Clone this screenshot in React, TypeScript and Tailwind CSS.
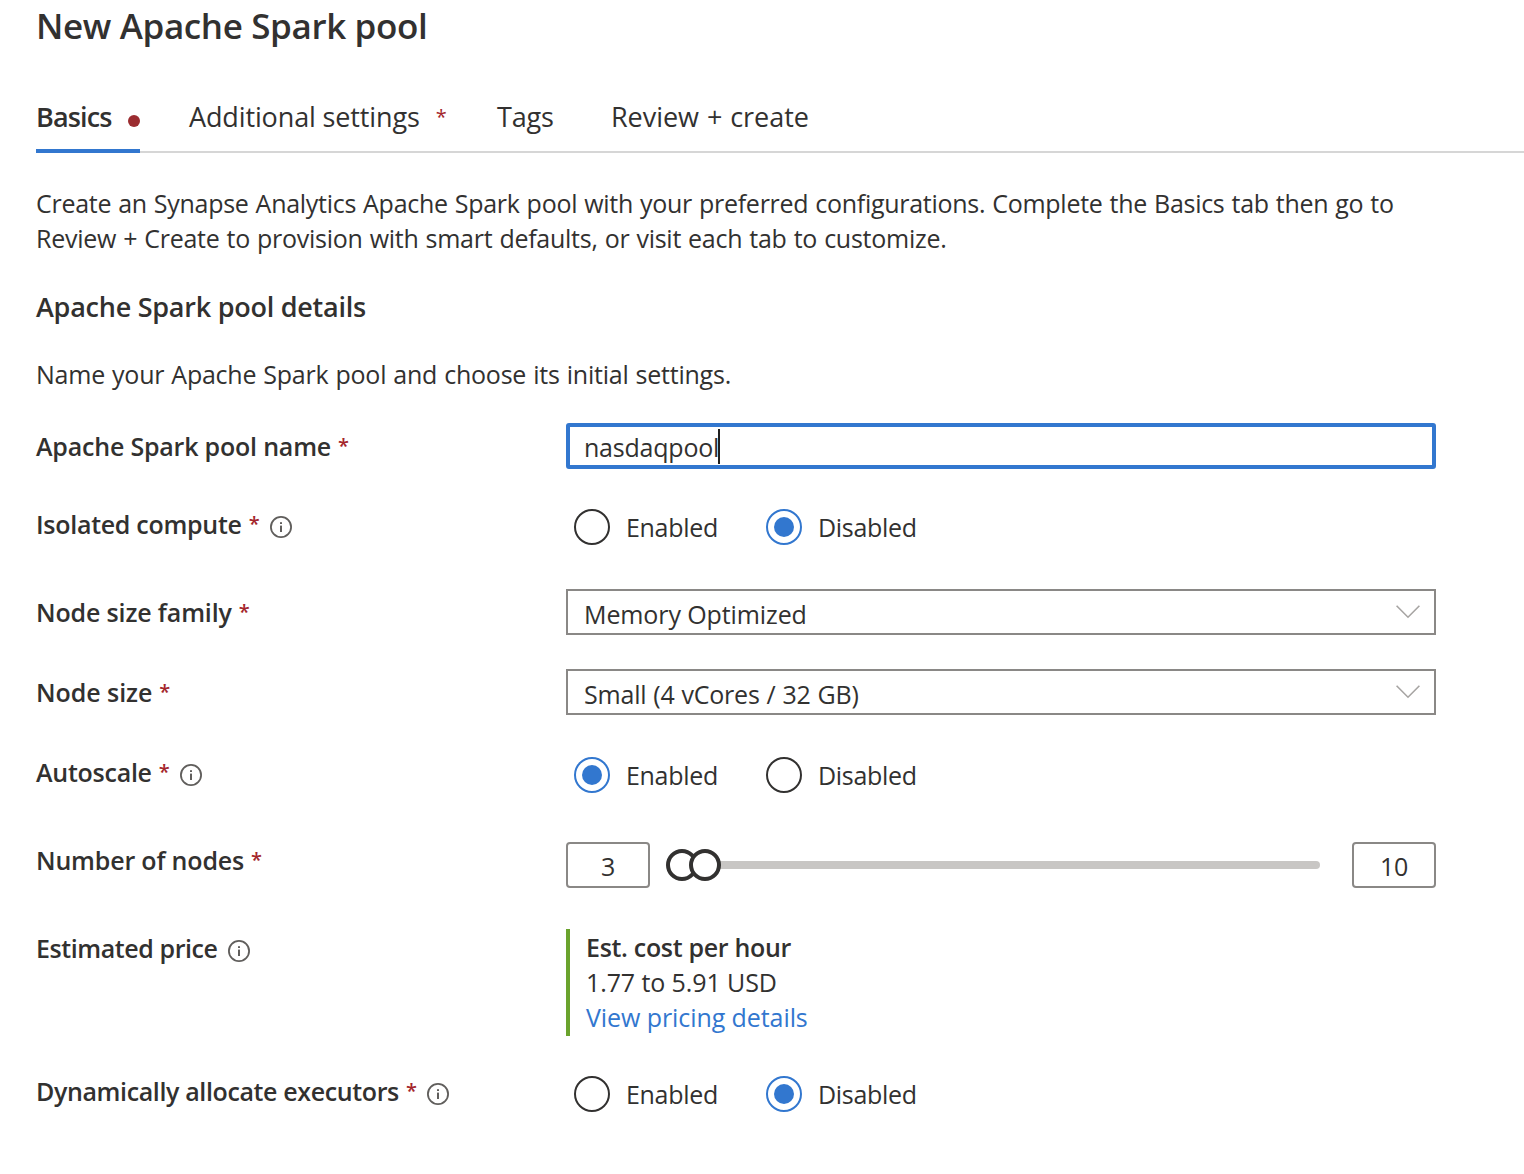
import React, { ReactNode } from "react";

function InfoIcon() {
  return (
    <svg className="mt-[10px] ml-[10px] h-[22px] w-[22px] shrink-0" viewBox="0 0 22 22" fill="none">
      <circle cx="11" cy="11" r="10.1" stroke="#605e5c" strokeWidth="1.8" />
      <rect x="10" y="6.2" width="2" height="1.8" fill="#605e5c" />
      <rect x="10" y="9.6" width="2" height="6.4" fill="#605e5c" />
    </svg>
  );
}

function Star({ className }: { className: string }) {
  return <span className={`w-[11px] pt-[2px] text-[20px] leading-[32px] text-[#a4262c] ${className}`}>*</span>;
}

function Field({
  label,
  className,
  labelClass,
  required = true,
  info = false,
  children,
}: {
  label: string;
  className: string;
  labelClass: string;
  required?: boolean;
  info?: boolean;
  children: ReactNode;
}) {
  return (
    <div className={`flex items-start ${className}`}>
      <div className={`flex w-[530px] shrink-0 leading-[36px] font-semibold whitespace-nowrap ${labelClass}`}>
        <span>{label}</span>
        {required && <Star className="ml-[7px]" />}
        {info && <InfoIcon />}
      </div>
      {children}
    </div>
  );
}

function Radio({ label, checked, className }: { label: string; checked: boolean; className: string }) {
  return (
    <div className={`flex items-center ${className}`}>
      <span
        className={`flex h-9 w-9 items-center justify-center rounded-full border-2 ${
          checked ? "border-[#3277cf]" : "border-[#323130]"
        }`}
      >
        {checked && <span className="h-5 w-5 rounded-full bg-[#3277cf]" />}
      </span>
      <span className="ml-4 leading-[36px] tracking-[-0.3px]">{label}</span>
    </div>
  );
}

function Toggle({ enabled }: { enabled: boolean }) {
  return (
    <div className="flex pt-[3px] pl-2">
      <Radio label="Enabled" checked={enabled} className="w-[192px]" />
      <Radio label="Disabled" checked={!enabled} className="" />
    </div>
  );
}

function Select({ value, tracking }: { value: string; tracking: string }) {
  return (
    <div className="flex h-[46px] w-[870px] items-start justify-between border-2 border-[#8a8886] pt-[5px] pr-[14px] pl-4">
      <span className={`leading-[36px] ${tracking}`}>{value}</span>
      <svg className="mt-[9px] h-[14px] w-6" viewBox="0 0 24 14" fill="none">
        <path d="M0.6 0.8 L12 12.2 L23.4 0.8" stroke="#a6a4a2" strokeWidth="1.6" />
      </svg>
    </div>
  );
}

function NumberBox({ value }: { value: string }) {
  return (
    <div className="flex h-[46px] w-[84px] justify-center rounded-[4px] border-2 border-[#8a8886] pt-[4px] leading-[36px] tracking-[-0.4px]">
      {value}
    </div>
  );
}

export default function App() {
  return (
    <main className="h-[1174px] w-full overflow-hidden bg-white pl-9 font-['Open_Sans',sans-serif] text-[25px] text-[#323130]">
      <h1 className="pt-[1px] text-[35px] leading-[50px] font-semibold tracking-[-0.37px]">New Apache Spark pool</h1>

      <nav className="mt-[48px] flex h-[54px] border-b-2 border-[#d6d6d6] text-[27px] leading-[36px]">
        <div className="-mb-[2px] flex w-[104px] items-start justify-between border-b-4 border-[#3277cf]">
          <span className="font-semibold tracking-[-0.85px]">Basics</span>
          <span className="mt-[16px] h-3 w-3 rounded-full bg-[#9b2c30]" />
        </div>
        <div className="ml-[49px] flex w-[308px]">
          <span className="tracking-[-0.13px]">Additional settings</span>
          <Star className="ml-[16px]" />
        </div>
        <span className="w-[114px] tracking-[-0.15px]">Tags</span>
        <span className="tracking-[-0.05px] [word-spacing:1px]">Review + create</span>
      </nav>

      <p className="mt-[33px] leading-[35px] whitespace-nowrap">
        <span className="block tracking-[-0.28px] [word-spacing:0.8px]">
          Create an Synapse Analytics Apache Spark pool with your preferred configurations. Complete the Basics tab then go to
        </span>
        <span className="block tracking-[-0.26px] [word-spacing:0.8px]">
          Review + Create to provision with smart defaults, or visit each tab to customize.
        </span>
      </p>

      <h2 className="mt-[33px] text-[27px] leading-[36px] font-semibold tracking-[-0.25px]">Apache Spark pool details</h2>
      <p className="mt-[31px] leading-[36px] tracking-[-0.23px] [word-spacing:0.8px]">
        Name your Apache Spark pool and choose its initial settings.
      </p>

      <form className="flex flex-col">
        <Field label="Apache Spark pool name" className="mt-[31px] h-[46px]" labelClass="pt-[5px] tracking-[-0.2px]">
          <div className="flex h-[46px] w-[870px] items-start rounded-[3px] border-4 border-[#3277cf] pt-[2px] pl-[14px]">
            <span className="leading-[36px] tracking-[-0.22px]">nasdaqpool</span>
            <span className="-ml-[1px] h-[35px] w-[2px] bg-[#201f1e]" />
          </div>
        </Field>
        <Field label="Isolated compute" info className="mt-[37px] h-[39px]" labelClass="tracking-[-0.28px]">
          <Toggle enabled={false} />
        </Field>
        <Field label="Node size family" className="mt-[44px] h-[46px]" labelClass="pt-[5px] tracking-[-0.143px]">
          <Select value="Memory Optimized" tracking="tracking-[-0.1px]" />
        </Field>
        <Field label="Node size" className="mt-[34px] h-[46px]" labelClass="pt-[5px] tracking-[-0.05px]">
          <Select value="Small (4 vCores / 32 GB)" tracking="tracking-[-0.2px] [word-spacing:0.6px]" />
        </Field>
        <Field label="Autoscale" info className="mt-[39px] h-[39px]" labelClass="tracking-[-0.25px]">
          <Toggle enabled />
        </Field>
        <Field label="Number of nodes" className="mt-[49px] h-[46px]" labelClass="tracking-[-0.177px]">
          <NumberBox value="3" />
          <div className="relative ml-4 flex h-[46px] w-[654px] items-center">
            <div className="ml-1 h-2 flex-1 rounded-full bg-[#c8c6c4]" />
            <span className="absolute top-[7px] left-0 h-8 w-8 rounded-full border-4 border-[#323130] bg-white" />
            <span className="absolute top-[7px] left-[23px] h-8 w-8 rounded-full border-4 border-[#323130] bg-white" />
          </div>
          <div className="ml-8">
            <NumberBox value="10" />
          </div>
        </Field>
        <Field
          label="Estimated price"
          required={false}
          info
          className="mt-[41px] h-[107px]"
          labelClass="pt-[1px] tracking-[-0.42px]"
        >
          <div className="flex h-[107px] flex-col border-l-4 border-[#6aa32d] pt-[1px] pl-4 leading-[35px]">
            <span className="font-semibold tracking-[-0.315px]">Est. cost per hour</span>
            <span className="tracking-[-0.1px]">1.77 to 5.91 USD</span>
            <a className="tracking-[-0.08px] text-[#3277cf]">View pricing details</a>
          </div>
        </Field>
        <Field label="Dynamically allocate executors" info className="mt-[37px] h-[39px]" labelClass="tracking-[-0.37px]">
          <Toggle enabled={false} />
        </Field>
      </form>
    </main>
  );
}
